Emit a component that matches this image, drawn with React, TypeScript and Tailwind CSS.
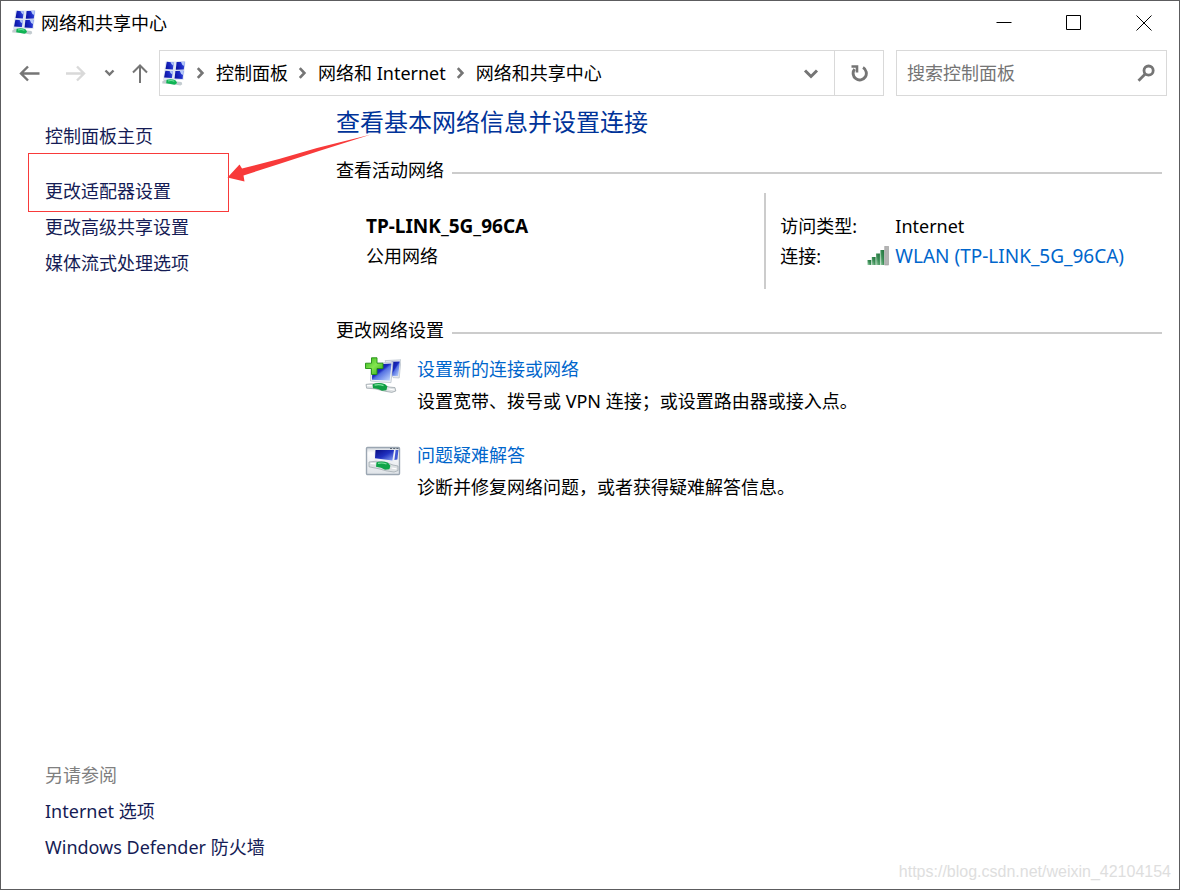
import React, { useState } from 'react';

const TASKS = ['更改适配器设置', '更改高级共享设置', '媒体流式处理选项'];
const SEE_ALSO = ['Internet 选项', 'Windows Defender 防火墙'];
const CRUMBS = ['控制面板', '网络和 Internet', '网络和共享中心'];

const NetworkIcon = () => (
  <svg width="24" height="25" viewBox="0 0 24 25" aria-hidden="true">
    <defs>
      <linearGradient id="pane" x1="0" y1="0.6" x2="1" y2="0.3">
        <stop offset="0" stopColor="#0a12a0" />
        <stop offset="0.55" stopColor="#1a28c4" />
        <stop offset="1" stopColor="#3c55dc" />
      </linearGradient>
    </defs>
    <path d="M3.5 0.5h20l-2 18.5H1z" fill="#dfe6f2" />
    <path d="M4.8 0.8l7 0.6-0.9 7.2-7.4-0.6z" fill="url(#pane)" />
    <path d="M14.6 1l8.2-0.2-1 7.8-8 0.2z" fill="url(#pane)" />
    <path d="M3.4 9.8l7.4 0.4-0.9 6.8-7.8-0.6z" fill="url(#pane)" />
    <path d="M13.4 10l8.2-0.2-1 8.2-8-0.6z" fill="url(#pane)" />
    <path d="M8.6 1.1l3.2 0.3-0.4 3.4q-2.2-0.8-2.8-3.7zM19 0.9h3.8l-0.5 4q-2.6-1-3.3-4zM7.6 10l3.2 0.2-0.4 3.2q-2.2-0.6-2.8-3.4zM17.8 9.9l3.8-0.1-0.5 4.2q-2.6-1-3.3-4.1z" fill="#b4c8fa" />
    <path d="M0.3 20.6l2-1.7 6 0.2 6.5 1.4 4.7 0.4 0.8 2.4-1.8 1.2-6-1-7.5-0.8-4.7-0.2z" fill="#c3ccd0" />
    <path d="M4.6 18.8q4.4-1.4 8.8 0.4l1.6 2.2q-0.4 2-2.6 2.4l-3.8-0.8-4.4-0.8z" fill="#10b454" />
    <path d="M6 20q3.4-1 6.4 0.2" stroke="#6fe39a" strokeWidth="1.1" fill="none" />
  </svg>
);

const NewConnectionIcon = () => (
  <svg width="36" height="36" viewBox="0 0 36 36" aria-hidden="true">
    <defs>
      <linearGradient id="screen" x1="0" y1="0.1" x2="0.8" y2="1">
        <stop offset="0" stopColor="#0a1496" />
        <stop offset="0.45" stopColor="#1c2cc0" />
        <stop offset="0.55" stopColor="#5572e2" />
        <stop offset="1" stopColor="#b4ccfb" />
      </linearGradient>
      <linearGradient id="plus" x1="0" y1="0" x2="1" y2="1">
        <stop offset="0" stopColor="#35b31e" />
        <stop offset="0.5" stopColor="#84e650" />
        <stop offset="1" stopColor="#2aa316" />
      </linearGradient>
    </defs>
    <path d="M20 3.6l16-0.8-1.8 18.2-6.2-0.4z" fill="#e4e8ee" stroke="#b5bec9" strokeWidth="0.7" />
    <path d="M26.5 4.8l8.3-0.4-1.6 14.6-6.2-0.2z" fill="url(#screen)" />
    <path d="M6 6.5l22-1.5-2 20.6-11-0.6-9.5-1z" fill="#eef1f5" stroke="#b5bec9" strokeWidth="0.7" />
    <path d="M7.5 7.5l19-1.1-1.8 17.2-17.7-0.8z" fill="url(#screen)" />
    <path d="M6.5 0.8H12v5.4h6v5.3h-6v6H6.5v-6h-6V6.2h6z" fill="url(#plus)" stroke="#218f12" strokeWidth="0.9" />
    <path d="M1 27.4l5-0.6 10 0.2 8 3 6 0.6 0.8 3.4-4 1.4-7-1.2-9.8-2.4-8.4-0.6z" fill="#dde1e3" stroke="#949ea3" strokeWidth="0.7" />
    <path d="M2 28.6h5M23.5 32l6 1" stroke="#fff" strokeWidth="1.2" />
    <path d="M7.6 27.2q6.4-2.4 12.6 0l2.2 2.4-1 3.6-4.4 0.6-4-1.8-5-0.8z" fill="#0f9e44" />
    <path d="M9.5 28.2q4.5-1.2 9 0.4" stroke="#7fe3a0" strokeWidth="1.2" fill="none" />
  </svg>
);

const TroubleshootIcon = () => (
  <svg width="36" height="30" viewBox="0 0 36 30" aria-hidden="true">
    <defs>
      <linearGradient id="frame" x1="0" y1="0" x2="0" y2="1">
        <stop offset="0" stopColor="#cfd5db" />
        <stop offset="0.2" stopColor="#fdfdfd" />
        <stop offset="1" stopColor="#dfe3e8" />
      </linearGradient>
      <linearGradient id="display" x1="0" y1="0" x2="1" y2="1">
        <stop offset="0" stopColor="#070c80" />
        <stop offset="0.5" stopColor="#2030c0" />
        <stop offset="1" stopColor="#8aa6f4" />
      </linearGradient>
    </defs>
    <rect x="1.5" y="1.5" width="33" height="27" rx="1" fill="url(#frame)" stroke="#9ba6b2" strokeWidth="1.4" />
    <path d="M25 2.5h2M28.2 2.5h2M31.4 2.5h2" stroke="#5d6875" strokeWidth="1.1" />
    <path d="M9 4h21l-1.5 13-19-3z" fill="#eceff3" />
    <path d="M10.5 4h18.5l-1.6 10.5-17.4-2.2z" fill="url(#display)" />
    <path d="M30.6 4h2.8l-1 9.5-3 0.5z" fill="#4158d4" />
    <path d="M4 16l7-0.8 10 1.2 7 2.6 5 1v4.6l-4 1.4-8-1.2-7-2-10-2z" fill="#dde1e3" stroke="#9aa4a9" strokeWidth="0.7" />
    <path d="M11.5 16.2q6-1.6 11.5 0.6l2.4 3-1 3.4-4.4 0.6-4-2-5-1z" fill="#0fa448" />
    <path d="M13 17.4q4.5-1 8.5 0.6" stroke="#7fe3a0" strokeWidth="1.2" fill="none" />
    <path d="M5.5 17.4l5 0.4M26.5 22l5 0.8" stroke="#fff" strokeWidth="1.2" />
  </svg>
);

const SignalIcon = () => (
  <svg width="22" height="20" viewBox="0 0 22 20" aria-hidden="true">
    <defs>
      <linearGradient id="bar" x1="1" y1="0" x2="0" y2="1">
        <stop offset="0" stopColor="#1f6e3a" />
        <stop offset="0.5" stopColor="#3c8f57" />
        <stop offset="1" stopColor="#a3d3ae" />
      </linearGradient>
    </defs>
    <rect x="0.5" y="14" width="3.8" height="5" fill="url(#bar)" />
    <rect x="4.8" y="11" width="3.8" height="8" fill="url(#bar)" />
    <rect x="9.1" y="7.5" width="3.8" height="11.5" fill="url(#bar)" />
    <rect x="13.4" y="4" width="3.8" height="15" fill="url(#bar)" />
    <rect x="17.8" y="0.5" width="3.7" height="18.5" fill="#b4b4b4" stroke="#989898" strokeWidth="0.6" />
  </svg>
);

const Chevron = () => (
  <svg width="10" height="12" viewBox="0 0 10 12" className="mx-[10px] shrink-0" aria-hidden="true">
    <path d="M1.8 1.2L6.4 6l-4.6 4.8" fill="none" stroke="#757575" strokeWidth="2.6" />
  </svg>
);

const SectionTitle: React.FC<{ children: React.ReactNode }> = ({ children }) => (
  <div className="flex items-center gap-2">
    <h2>{children}</h2>
    <div className="mt-1.5 h-0.5 flex-1 bg-[#cccccc]" />
  </div>
);

interface SettingProps {
  icon: React.ReactNode;
  title: string;
  text: string;
}

const Setting: React.FC<SettingProps> = ({ icon, title, text }) => (
  <div className="flex items-start gap-4 pl-[29px]">
    <div className="flex h-9 w-9 shrink-0 items-center">{icon}</div>
    <div className="space-y-2">
      <a href="#" className="block text-[#0066cc] hover:underline">{title}</a>
      <p>{text}</p>
    </div>
  </div>
);

export default function App() {
  const [query, setQuery] = useState('');

  return (
    <div className="relative flex min-h-screen flex-col border border-[#5c5c5e] bg-white font-['Noto_Sans','Noto_Sans_CJK_SC',sans-serif] text-[18px] leading-6 text-black">
      {/* Title bar */}
      <header className="flex h-[43px] items-center pl-[11px]">
        <NetworkIcon />
        <h1 className="ml-[5px] flex-1">网络和共享中心</h1>
        <button type="button" aria-label="最小化" className="flex h-full w-[70px] items-center justify-center hover:bg-gray-200">
          <svg width="16" height="16" viewBox="0 0 16 16"><path d="M0.5 7.5h15" stroke="#000" /></svg>
        </button>
        <button type="button" aria-label="最大化" className="flex h-full w-[70px] items-center justify-center hover:bg-gray-200">
          <svg width="16" height="16" viewBox="0 0 16 16"><path d="M0.5 0.5h14v14h-14z" fill="none" stroke="#000" /></svg>
        </button>
        <button type="button" aria-label="关闭" className="flex h-full w-[70px] items-center justify-center hover:bg-red-500">
          <svg width="16" height="16" viewBox="0 0 16 16"><path d="M0.5 0.5l15 15M15.5 0.5l-15 15" stroke="#000" strokeWidth="1" /></svg>
        </button>
      </header>

      {/* Navigation row */}
      <div className="mt-1.5 flex h-[46px] items-stretch pr-3">
        <nav className="flex w-[158px] shrink-0 items-center pl-[17px]" aria-label="导航">
          <button type="button" aria-label="后退">
            <svg width="22" height="18" viewBox="0 0 22 18"><path d="M21.5 9.5h-18M10 2.5l-7 7 7 7" fill="none" stroke="#757575" strokeWidth="2.4" /></svg>
          </button>
          <button type="button" aria-label="前进" disabled className="ml-6">
            <svg width="22" height="18" viewBox="0 0 22 18"><path d="M2 9.5h18M13 2.5l7 7-7 7" fill="none" stroke="#d9d9d9" strokeWidth="2.4" /></svg>
          </button>
          <button type="button" aria-label="最近位置" className="ml-[18px]">
            <svg width="12" height="10" viewBox="0 0 12 10"><path d="M1.5 2.5l4 4 4-4" fill="none" stroke="#757575" strokeWidth="2.4" /></svg>
          </button>
          <button type="button" aria-label="向上" className="ml-[15px]">
            <svg width="18" height="20" viewBox="0 0 18 20"><path d="M9 20V2.5M2 9.5l7-7 7 7" fill="none" stroke="#757575" strokeWidth="2" /></svg>
          </button>
        </nav>

        <div className="flex min-w-0 flex-1 border border-[#d9d9d9]">
          <div className="flex min-w-0 flex-1 items-center pl-0.5">
            <NetworkIcon />
            {CRUMBS.map((crumb) => (
              <React.Fragment key={crumb}>
                <Chevron />
                <a href="#" className="truncate">{crumb}</a>
              </React.Fragment>
            ))}
          </div>
          <button type="button" aria-label="历史记录" className="px-[15px]">
            <svg width="16" height="12" viewBox="0 0 16 12"><path d="M2 3.5l6 6 6-6" fill="none" stroke="#757575" strokeWidth="3" /></svg>
          </button>
          <button type="button" aria-label="刷新" className="flex w-[49px] items-center justify-center border-l border-[#d9d9d9]">
            <svg width="18" height="18" viewBox="0 0 18 18">
              <path d="M13 3.6A6.6 6.6 0 1 1 4.6 5.2" fill="none" stroke="#757575" strokeWidth="2.9" />
              <path d="M1.5 2.5H7v6" fill="none" stroke="#757575" strokeWidth="2.6" />
            </svg>
          </button>
        </div>

        <div className="ml-3 flex w-[271px] items-center border border-[#d9d9d9] pr-[11px] pl-2.5">
          <input
            type="search"
            value={query}
            onChange={(e) => setQuery(e.target.value)}
            placeholder="搜索控制面板"
            aria-label="搜索控制面板"
            className="min-w-0 flex-1 outline-none placeholder:text-[#757575]"
          />
          <button type="button" aria-label="搜索">
            <svg width="18" height="18" viewBox="0 0 18 18">
              <circle cx="11.6" cy="6.6" r="4.6" fill="none" stroke="#757575" strokeWidth="2.8" />
              <path d="M8.2 10l-6.7 6.7" stroke="#757575" strokeWidth="2.8" />
            </svg>
          </button>
        </div>
      </div>

      <div className="flex flex-1">
        <aside className="flex w-[335px] shrink-0 flex-col pt-7 pb-[30px] pl-11 text-[#151c55]">
          <a href="#" className="self-start hover:underline">控制面板主页</a>
          <ul className="mt-[31px] space-y-3">
            {TASKS.map((task, i) => (
              <li key={task} className="relative">
                <a href="#" className="hover:underline">{task}</a>
                {/* Callout around the first task, with its arrow */}
                {i === 0 && (
                  <div className="pointer-events-none absolute -top-[26px] -left-[17px] h-[59px] w-[201px] border border-[#f83a3a]">
                    <svg width="146" height="50" viewBox="0 0 146 50" className="absolute -top-5 left-[198px]" aria-hidden="true">
                      <path d="M144 0.5L90 14 52 25 15 34.5l-2.5-4L0.5 43.5l17 4-1-6L52 30 92 17z" fill="#f83a3a" />
                    </svg>
                  </div>
                )}
              </li>
            ))}
          </ul>
          <div className="mt-auto space-y-3">
            <h2 className="text-[#808080]">另请参阅</h2>
            {SEE_ALSO.map((item) => (
              <a key={item} href="#" className="block hover:underline">{item}</a>
            ))}
          </div>
        </aside>

        <main className="min-w-0 flex-1 pt-2.5 pr-[17px]">
          <h1 className="text-2xl leading-8 text-[#003399]">查看基本网络信息并设置连接</h1>

          <section className="mt-5">
            <SectionTitle>查看活动网络</SectionTitle>
            <div className="mt-[11px] grid grid-cols-[14fr_13fr]">
              <div className="space-y-1.5 py-[21px] pl-[30px]">
                <p className="text-[19px] font-bold">TP-LINK_5G_96CA</p>
                <p>公用网络</p>
              </div>
              <dl className="grid grid-cols-[87px_1fr] content-start gap-y-1.5 border-l-2 border-[#cccccc] py-[21px] pl-3.5">
                <dt>访问类型:</dt>
                <dd className="pl-7">Internet</dd>
                <dt>连接:</dt>
                <dd className="flex items-center gap-1.5">
                  <SignalIcon />
                  <a href="#" className="text-[19px] text-[#0066cc] hover:underline">WLAN (TP-LINK_5G_96CA)</a>
                </dd>
              </dl>
            </div>
          </section>

          <section className="mt-[29px]">
            <SectionTitle>更改网络设置</SectionTitle>
            <div className="mt-[15px] space-y-[30px]">
              <Setting
                icon={<NewConnectionIcon />}
                title="设置新的连接或网络"
                text="设置宽带、拨号或 VPN 连接；或设置路由器或接入点。"
              />
              <Setting
                icon={<TroubleshootIcon />}
                title="问题疑难解答"
                text="诊断并修复网络问题，或者获得疑难解答信息。"
              />
            </div>
          </section>
        </main>
      </div>

      <p className="pointer-events-none absolute right-2 bottom-[5px] font-['Liberation_Sans',sans-serif] text-base text-[#dedede]">
        https://blog.csdn.net/weixin_42104154
      </p>
    </div>
  );
}
